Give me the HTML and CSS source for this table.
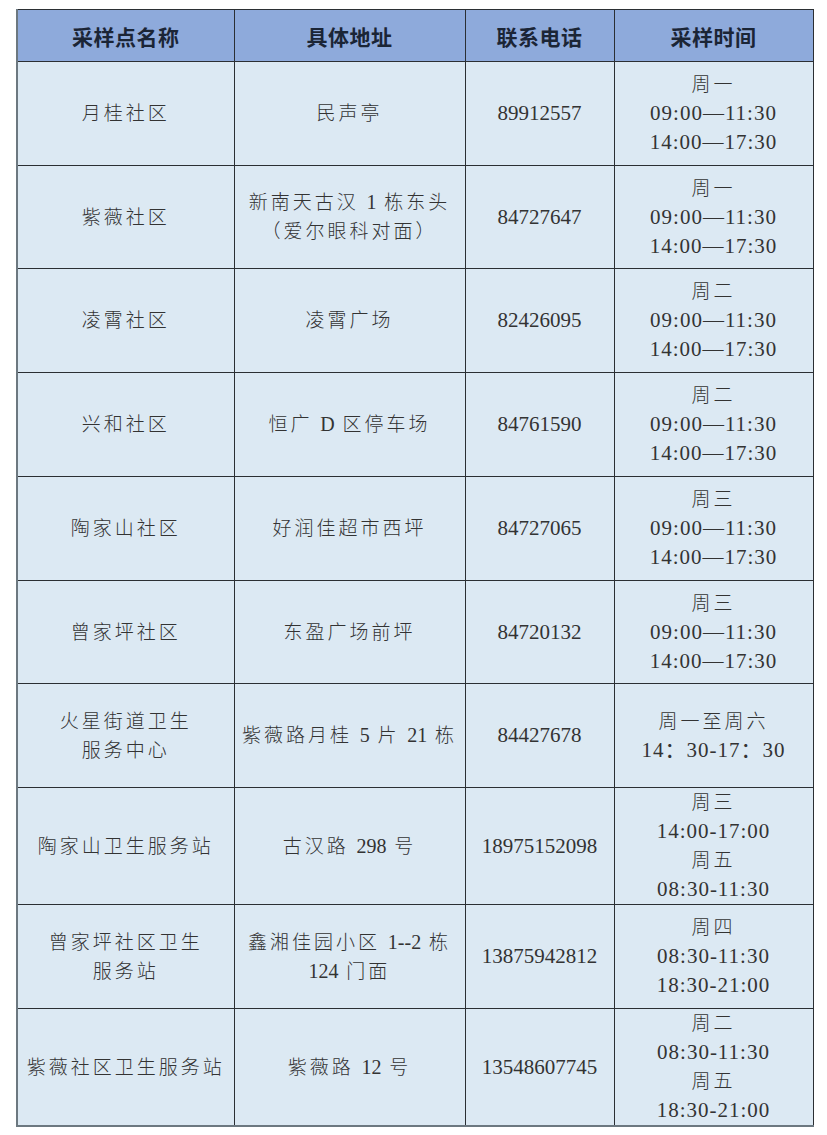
FILE: index.html
```html
<!DOCTYPE html>
<html lang="zh-CN">
<head>
<meta charset="utf-8">
<title>采样点</title>
<link rel="stylesheet" href="styles.css">
</head>
<body>
<div class="page">
<table class="grid">
  <colgroup>
    <col class="c1"><col class="c2"><col class="c3"><col class="c4">
  </colgroup>
  <thead>
    <tr class="head">
      <th>采样点名称</th><th>具体地址</th><th>联系电话</th><th>采样时间</th>
    </tr>
  </thead>
  <tbody>
    <tr class="r104">
      <td>月桂社区</td><td>民声亭</td><td class="num">89912557</td>
      <td><div>周一</div><div class="t">09:00—11:30</div><div class="t">14:00—17:30</div></td>
    </tr>
    <tr class="r103">
      <td>紫薇社区</td><td><div>新南天古汉 <span class="n">1</span> 栋东头</div><div>（爱尔眼科对面）</div></td><td class="num">84727647</td>
      <td><div>周一</div><div class="t">09:00—11:30</div><div class="t">14:00—17:30</div></td>
    </tr>
    <tr class="r104">
      <td>凌霄社区</td><td>凌霄广场</td><td class="num">82426095</td>
      <td><div>周二</div><div class="t">09:00—11:30</div><div class="t">14:00—17:30</div></td>
    </tr>
    <tr class="r104">
      <td>兴和社区</td><td>恒广 <span class="n">D</span> 区停车场</td><td class="num">84761590</td>
      <td><div>周二</div><div class="t">09:00—11:30</div><div class="t">14:00—17:30</div></td>
    </tr>
    <tr class="r104">
      <td>陶家山社区</td><td>好润佳超市西坪</td><td class="num">84727065</td>
      <td><div>周三</div><div class="t">09:00—11:30</div><div class="t">14:00—17:30</div></td>
    </tr>
    <tr class="r103">
      <td>曾家坪社区</td><td>东盈广场前坪</td><td class="num">84720132</td>
      <td><div>周三</div><div class="t">09:00—11:30</div><div class="t">14:00—17:30</div></td>
    </tr>
    <tr class="r104">
      <td><div>火星街道卫生</div><div>服务中心</div></td><td>紫薇路月桂 <span class="n">5</span> 片 <span class="n">21</span> 栋</td><td class="num">84427678</td>
      <td><div>周一至周六</div><div class="t">14：30-17：30</div></td>
    </tr>
    <tr class="r116">
      <td>陶家山卫生服务站</td><td>古汉路 <span class="n">298</span> 号</td><td class="num">18975152098</td>
      <td><div>周三</div><div class="t">14:00-17:00</div><div>周五</div><div class="t">08:30-11:30</div></td>
    </tr>
    <tr class="r104">
      <td><div>曾家坪社区卫生</div><div>服务站</div></td><td><div>鑫湘佳园小区 <span class="n">1--2</span> 栋</div><div><span class="n">124</span> 门面</div></td><td class="num">13875942812</td>
      <td><div>周四</div><div class="t">08:30-11:30</div><div class="t">18:30-21:00</div></td>
    </tr>
    <tr class="r116">
      <td>紫薇社区卫生服务站</td><td>紫薇路 <span class="n">12</span> 号</td><td class="num">13548607745</td>
      <td><div>周二</div><div class="t">08:30-11:30</div><div>周五</div><div class="t">18:30-21:00</div></td>
    </tr>
  </tbody>
</table>
</div>
</body>
</html>
```

FILE: styles.css
```css
html, body {
  margin: 0;
  padding: 0;
  background: #ffffff;
}

.page {
  padding: 9px 0 0 16px;
}

.grid {
  border-collapse: collapse;
  table-layout: fixed;
  width: 796px;
  border-top: 1px solid #2f3338;
  border-right: 1px solid #2f3338;
  border-left: 2px solid #6c7880;
  border-bottom: 2px solid #6c7880;
}

.c1 { width: 217px; }
.c2 { width: 231px; }
.c3 { width: 149px; }
.c4 { width: 199px; }

.grid th,
.grid td {
  border: 1px solid #2b2f33;
  padding: 0;
  text-align: center;
  vertical-align: middle;
}

.head th {
  height: 51px;
  background: #8eaadb;
  color: #1b2536;
  font-family: "Noto Sans CJK SC", "Noto Sans", sans-serif;
  font-weight: 700;
  font-size: 21px;
  letter-spacing: 0.5px;
}

.grid td {
  background: #dce9f3;
  color: #333333;
  font-family: "Liberation Serif", "Noto Sans CJK SC", serif;
  font-weight: 300;
  font-size: 19px;
  letter-spacing: 3px;
  line-height: 29px;
}

.grid td .n {
  letter-spacing: 0;
  font-size: 20px;
  font-weight: 400;
}

.r103 td { height: 102px; }
.r104 td { height: 103px; }
.r116 td { height: 115px; }

.grid td.num {
  font-size: 21px;
  letter-spacing: 0;
  font-weight: 400;
}

.grid td .t {
  font-size: 21px;
  letter-spacing: 1px;
  font-weight: 400;
}
```
